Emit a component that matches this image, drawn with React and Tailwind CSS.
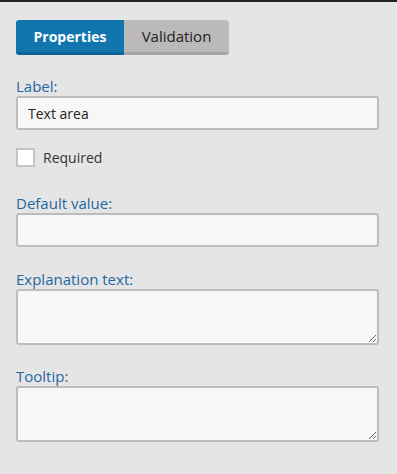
export default function App() {
  const font = { fontFamily: '"Open Sans", "Noto Sans", sans-serif' };
  return (
    <div className="w-[397px] h-[474px] bg-[#e5e5e5] overflow-hidden" style={font}>
      <div className="h-[2px] bg-[#222]"></div>
      <div className="pl-4 pr-[18px] pt-[18px]">
        {/* tabs */}
        <div className="flex h-[35px] w-[213px]">
          <div className="w-[108px] flex items-center justify-center bg-[#1176ae] border-b-[3px] border-[#0e6296] rounded-l-[3px] text-white font-bold text-[14px]">
            Properties
          </div>
          <div className="flex-1 flex items-center justify-center bg-[#bbb9b9] border-b-[3px] border-[#a6a5a5] rounded-r-[3px] text-[#222] text-[15px]">
            Validation
          </div>
        </div>

        <div className="mt-[21px] text-[15px] leading-5 text-[#1f68a3]">Label:</div>
        <input
          className="block w-full h-[34px] border-2 border-[#bcbcbc] rounded-[3px] bg-[#f7f7f7] px-[10px] text-[14px] text-[#222] outline-none"
          defaultValue="Text area"
        />

        <div className="mt-[18px] flex items-center h-[19px]">
          <div className="w-[19px] h-[19px] border-2 border-[#c4c4c4] bg-white"></div>
          <span className="ml-2 text-[14px] text-[#333]">Required</span>
        </div>

        <div className="mt-[26px] text-[15px] leading-5 text-[#1f68a3]">Default value:</div>
        <input className="block w-full h-[34px] border-2 border-[#bcbcbc] rounded-[3px] bg-[#f7f7f7] px-[10px] text-[14px] outline-none" />

        <div className="mt-[22px] text-[15px] leading-5 text-[#1f68a3]">Explanation text:</div>
        <textarea className="block w-full h-[56px] border-2 border-[#bcbcbc] rounded-[3px] bg-[#f7f7f7] px-[10px] text-[14px] outline-none"></textarea>

        <div className="mt-[21px] text-[15px] leading-5 text-[#1f68a3]">Tooltip:</div>
        <textarea className="block w-full h-[56px] border-2 border-[#bcbcbc] rounded-[3px] bg-[#f7f7f7] px-[10px] text-[14px] outline-none"></textarea>
      </div>
    </div>
  );
}
